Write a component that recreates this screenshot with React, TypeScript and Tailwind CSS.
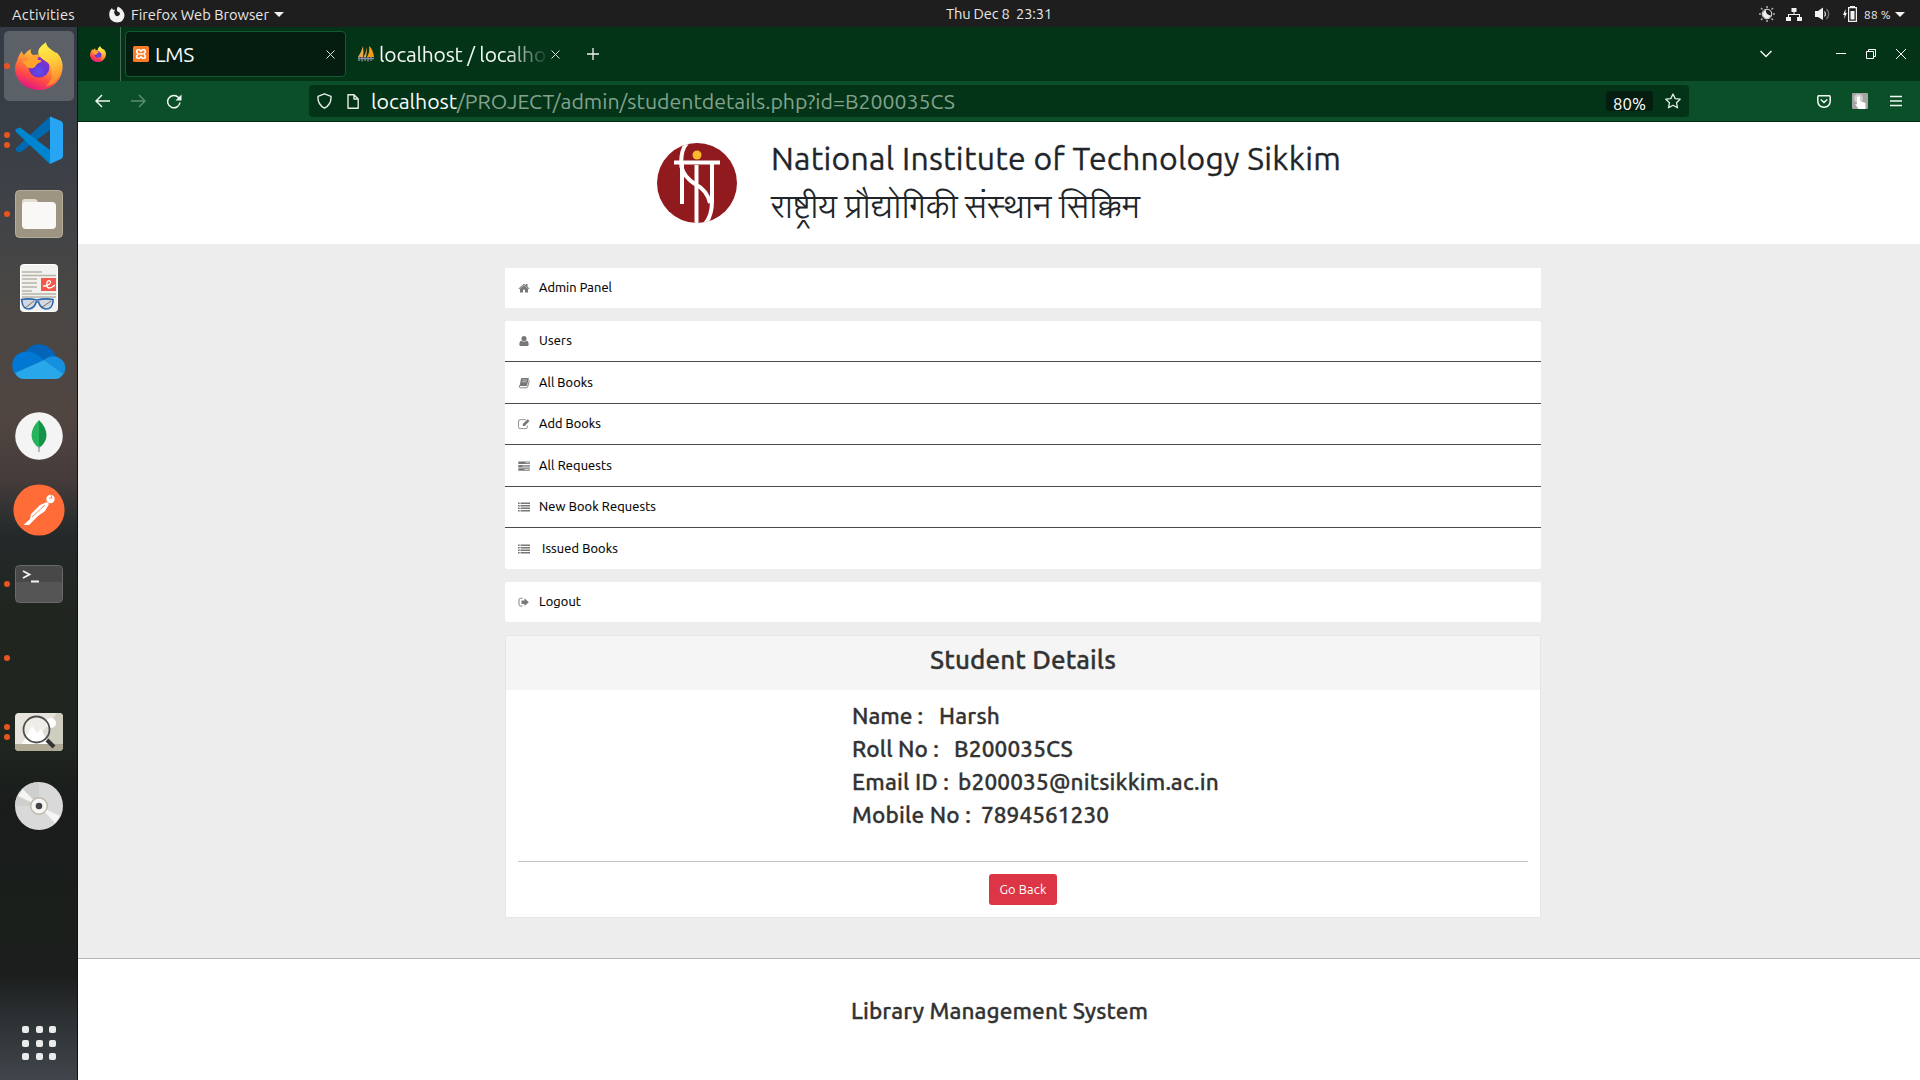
import React, { useLayoutEffect, useRef, useState } from "react";

function Fit({ w, text, className = "" }: { w: number; text: string; className?: string }) {
  const ref = useRef<HTMLSpanElement>(null);
  const [spacing, setSpacing] = useState(0);
  useLayoutEffect(() => {
    const natural = ref.current!.getBoundingClientRect().width;
    setSpacing((w - natural) / text.length);
  }, []);
  return (
    <span ref={ref} className={"inline-block whitespace-pre " + className} style={{ letterSpacing: spacing + "px" }}>
      {text}
    </span>
  );
}

function Firefox({ size }: { size: number }) {
  return (
    <svg width={size} height={size} viewBox="0 0 48 48">
      <defs>
        <linearGradient id="ffBody" x1="0.8" y1="0.1" x2="0.35" y2="1">
          <stop offset="0" stopColor="#ffe94a" />
          <stop offset="0.35" stopColor="#ff9a36" />
          <stop offset="0.7" stopColor="#ff4a45" />
          <stop offset="1" stopColor="#e31587" />
        </linearGradient>
        <radialGradient id="ffGlobe" cx="0.5" cy="0.7" r="0.75">
          <stop offset="0" stopColor="#5b4df0" />
          <stop offset="0.5" stopColor="#6a35d0" />
          <stop offset="1" stopColor="#a92bc0" />
        </radialGradient>
        <linearGradient id="ffTail" x1="0" y1="0" x2="0.2" y2="1">
          <stop offset="0" stopColor="#fff44f" />
          <stop offset="0.5" stopColor="#ffd03a" />
          <stop offset="1" stopColor="#ff8a30" />
        </linearGradient>
      </defs>
      <path d="M2 19C3 14 6 10 7 9C7 11 8 12 9 13C11 10 14 8 16 7C15 10 16 12 18 13L29 13C33 15 41 8 43 12C47 17 48 22 47.500 27C46 40 36 48 24 48C10 48 0 38 0 26C0 23 1 21 2 19Z" fill="url(#ffBody)" />
      <circle cx="24" cy="25" r="10.500" fill="url(#ffGlobe)" />
      <path d="M14 17C16 13 22 11 28 14C24 14 22 16 23 18C28 18 27 20 24 21C21 22 21 25 18 26C13 28 9 21 7 19C9 20 12 19 14 17Z" fill="#ffa22e" />
      <path d="M31 0C31 5 37 8 41 11C47 16 48 24 46 31C43 39 38 43 31 44C37 39 38 32 36 26C34 18 26 19 23.500 12C22 6 28 3 31 0Z" fill="url(#ffTail)" />
    </svg>
  );
}

function Slot({ dots = 0, active = false, children }: { dots?: number; active?: boolean; children?: React.ReactNode }) {
  return (
    <div className="flex h-[74px] shrink-0 items-center pl-[4px]">
      <div className={"relative flex h-[70px] w-[70px] items-center justify-center rounded-[5px] " + (active ? "bg-[#5c6168]" : "")}>
        <div className="absolute left-0 flex flex-col gap-[4px]">
          {Array.from({ length: dots }, (_, i) => (
            <span key={i} className="h-[6px] w-[6px] rounded-full bg-[#e95420]" />
          ))}
        </div>
        {children}
      </div>
    </div>
  );
}

function Dock() {
  return (
    <aside className="flex w-[78px] shrink-0 flex-col border-r border-[#121212] bg-[linear-gradient(180deg,#353b45_0%,#3b4047_13%,#494745_25%,#504541_37%,#453c3a_43%,#242a2b_48%,#20261f_55%,#1f251f_68%,#191c1b_74%,#1a1f1b_85%,#1c1e1d_90%,#2b3033_94%,#40464b_100%)] pt-[2px]">
      <Slot dots={1} active><Firefox size={48} /></Slot>
      <Slot dots={2}>
        <svg width="48" height="48" viewBox="0 0 48 48">
          <path d="M1 32L35 .5V14L6 36C4 37 2 36 1 34.500Q0 33 1 32Z" fill="#0069b0" />
          <path d="M1 16Q0 14 1 13L5 11.500 35 34V48L1 16Z" fill="#0086d1" />
          <path d="M35 .5L46 5Q48 6 48 8V40Q48 42 46 43L35 48Z" fill="#27a5f2" />
        </svg>
      </Slot>
      <Slot dots={1}>
        <svg width="48" height="48" viewBox="0 0 48 48">
          <rect x=".5" y=".5" width="47" height="47" rx="4" fill="#9d9482" stroke="#b6ae9a" />
          <path d="M7 20V12Q7 9 10 9H19Q22 9 23 12H30V20Z" fill="#e3dfd5" />
          <rect x="7" y="12" width="34" height="27" rx="4" fill="#f9f8f6" />
        </svg>
      </Slot>
      <Slot>
        <svg width="38" height="48" viewBox="0 0 38 48">
          <rect x=".5" y=".5" width="37" height="47" rx="3" fill="#f1f1f0" stroke="#fff" />
          <path d="M2 8H22M2 11.500H36M2 15H17M2 19H17M2 23H17M2 27H12M2 30H36M2 33H36" stroke="#b7b4a8" strokeWidth="1.600" />
          <rect x="21" y="14" width="15" height="13" fill="#f3584b" />
          <path d="M23 22C28 22 32 19 30 17C27 15 25 23 29 24C32 24 34 22 35 21" fill="none" stroke="#fff" strokeWidth="1.300" />
          <path d="M1.500 35.500Q9 34 17 36Q25 34 33 35.500V38Q32 45 26 45Q20 44 18.500 38H16Q15 44 9 45Q3 45 2 38Z" fill="#d5d9de" stroke="#2b68b3" strokeWidth="1.600" />
          <path d="M5 44L14 37M21 44L31 37" stroke="#555" strokeWidth=".8" />
        </svg>
      </Slot>
      <Slot>
        <svg width="54" height="36" viewBox="0 0 54 36">
          <path d="M13 9C17 0 28-2 36 3C41 6 43 9 44 13L30 20L12 11Z" fill="#0364b8" />
          <path d="M12 8C19 6 24 9 32 16L3 30C-3 22 1 9 12 8Z" fill="#0078d4" />
          <path d="M32 16C38 11 44 12 47 14C54 17 55 26 51 31Z" fill="#1490df" />
          <path d="M3 29L32 16L51 30C49 34 46 35 43 35H12C8 35 5 33 3 29Z" fill="#28a8ea" />
        </svg>
      </Slot>
      <Slot>
        <svg width="48" height="48" viewBox="0 0 48 48">
          <circle cx="24" cy="24" r="23.800" fill="#f4f4f4" />
          <path d="M24 8C14 18 14 29 24 36Z" fill="#27b35b" />
          <path d="M24 8C34 18 34 29 24 36Z" fill="#159447" />
          <path d="M24 34V40" stroke="#999" strokeWidth="1.300" />
        </svg>
      </Slot>
      <Slot>
        <svg className="-mt-px" width="52" height="52" viewBox="0 0 52 52">
          <circle cx="26" cy="26" r="25.600" fill="#ff6c37" />
          <circle cx="37.500" cy="15" r="4.200" fill="#fff" />
          <path d="M34 18L27 21L18 30L17 35L10.500 41L16 41L25 32L32 27L36 20Z" fill="#fff" />
          <path d="M32 21L19 33M36 14H39L38 11" fill="none" stroke="#ff6c37" strokeWidth=".8" />
        </svg>
      </Slot>
      <Slot dots={1}>
        <svg width="48" height="38" viewBox="0 0 48 38">
          <rect x=".5" y=".5" width="47" height="37" rx="4" fill="#555" stroke="#6a6a6a" />
          <path d="M1 17V5Q1 1 5 1H43Q47 1 47 5V17Z" fill="#484848" />
          <path d="M8 6L14.500 9.500L8 13M16 16.500H24" fill="none" stroke="#f4f4f4" strokeWidth="1.800" />
        </svg>
      </Slot>
      <Slot dots={1} />
      <Slot dots={2}>
        <svg width="48" height="38" viewBox="0 0 48 38">
          <defs><clipPath id="viewer"><rect width="48" height="38" rx="4" /></clipPath></defs>
          <g clipPath="url(#viewer)">
            <rect width="48" height="38" fill="#e6e4dc" />
            <path d="M42 0H48V31H18Z" fill="#cfccc0" />
            <circle cx="36" cy="10" r="5" fill="#fff" />
            <path d="M7 31L17 13L22 20L26 16L34 31Z" fill="#fff" />
            <rect y="31" width="48" height="7" fill="#b0a995" />
          </g>
          <circle cx="21.500" cy="16.500" r="13" fill="#ffffff55" stroke="#505050" strokeWidth="1.800" />
          <path d="M32 27L39 34" stroke="#333" strokeWidth="4" />
        </svg>
      </Slot>
      <Slot>
        <svg width="48" height="48" viewBox="0 0 48 48">
          <circle cx="24" cy="24" r="24" fill="#d9d9d9" />
          <path d="M24 24V0A24 24 0 0 0 0 24Z" fill="#cfcfcf" />
          <path d="M24 24L3 14L8 7ZM24 24L45 34L40 41Z" fill="#f6f6f4" />
          <circle cx="24" cy="24" r="8.300" fill="#f5f5f3" stroke="#bdb7a8" strokeWidth="1.400" />
          <circle cx="24" cy="24" r="3.300" fill="#444" />
        </svg>
      </Slot>
      <div className="mt-auto mb-[20px] ml-[22px] grid grid-cols-3 gap-[6.500px] self-start">
        {Array.from({ length: 9 }, (_, i) => (
          <span key={i} className="h-[7px] w-[7px] rounded-[2px] bg-[#ebebeb]" />
        ))}
      </div>
    </aside>
  );
}

function TopBar() {
  return (
    <header className="grid h-[27px] shrink-0 grid-cols-3 items-center bg-[#1e1e1e] text-[14.670px] leading-[27px] text-[#e8e8e8]">
      <div className="flex items-center">
        <Fit w={63} text="Activities" className="ml-[12px] pt-px" />
        <svg className="ml-[34px]" width="16" height="17" viewBox="0 0 16 16">
          <path d="M1 4L3 1.500L4 3.500L6 3L5 6L6.500 9Q8.500 10.500 10.500 8.500Q12 6 8.500 5Q7 3 9 0Q15 3 15.500 9Q15 15.500 8 16Q.5 15 .3 9Q0 6 1 4Z" fill="#f2f2f2" />
        </svg>
        <Fit w={138} text="Firefox Web Browser" className="ml-[6px] pt-px" />
        <span className="ml-[5px] border-x-[5px] border-t-[5px] border-x-transparent border-t-[#f2f2f2]" />
      </div>
      <div className="flex -translate-y-px justify-center pl-[78px]">
        <Fit w={106} text="Thu Dec 8  23:31" />
      </div>
      <div className="flex items-center justify-end pr-[15px]">
        <svg width="16" height="16" viewBox="0 0 16 16">
          <circle cx="8" cy="8" r="4.800" fill="none" stroke="#eee" strokeWidth="1" />
          <path d="M7 4Q6.500 9 12 9.500A4.200 4.200 0 1 1 7 4Z" fill="#eee" />
          <path d="M8 0V2M8 14V16M0 8H2M14 8H16M2 2L3.500 3.500M14 2L12.500 3.500M2 14L3.500 12.500M14 14L12.500 12.500" stroke="#aaa" strokeWidth="1.600" />
        </svg>
        <svg className="ml-[11px]" width="16" height="13" viewBox="0 0 16 13">
          <path d="M5.500 0H10.500V4H8.500V6H14V9H16V13H11V9H13V7H3V9H5V13H0V9H2V6H7.500V4H5.500Z" fill="#f2f2f2" />
        </svg>
        <svg className="ml-[13px]" width="15" height="14" viewBox="0 0 15 14">
          <path d="M0 4H3L8 .5V13L3 10H0Z" fill="#f2f2f2" />
          <path d="M9.500 4.500Q11.500 7 9.500 9.500" fill="none" stroke="#ddd" strokeWidth="1.200" />
          <path d="M11.500 2Q16 7 11.500 12" fill="none" stroke="#777" strokeWidth="1.200" />
        </svg>
        <svg className="ml-[13px]" width="15" height="16" viewBox="1 0 15 16">
          <path d="M3.500 3L1 9H2.700L2 13L5 7H3.500Z" fill="#f2f2f2" />
          <path d="M6.600 1.600H14.400V15.300H6.600Z" fill="none" stroke="#f2f2f2" strokeWidth="1.200" />
          <path d="M8 0H13V2H8ZM8.500 5H12.500V13.500H8.500Z" fill="#f2f2f2" />
        </svg>
        <Fit w={27} text="88 %" className="ml-[6px] pt-px text-[11.700px]" />
        <span className="ml-[4px] border-x-[5px] border-t-[5px] border-x-transparent border-t-[#f2f2f2]" />
      </div>
    </header>
  );
}

function TabStrip() {
  return (
    <div className="flex h-[54px] shrink-0 items-center bg-[#043418] text-[21px] text-[#f4f8f5]">
      <div className="flex h-full w-[43px] items-center border-r-[1px] border-[#4b6b57] pl-[12px]"><Firefox size={16} /></div>
      <div className="ml-[4px] flex h-[46px] w-[221px] items-center rounded-[4px] border border-[#135a31] bg-[#051d10] pl-[7px]">
        <svg width="16" height="16" viewBox="0 0 16 16">
          <rect width="16" height="16" rx="1.500" fill="#fb7a24" />
          <path d="M5 3.800H6.500L8 5.300L9.500 3.800H11Q12.500 4 12.300 6L11 8L12.300 10Q12.500 12 11 12.200H9.500L8 10.700L6.500 12.200H5Q3.500 12 3.700 10L5 8L3.700 6Q3.500 4 5 3.800ZM6 8H10" fill="none" stroke="#fff" strokeWidth="1.600" />
        </svg>
        <Fit w={39} text="LMS" className="ml-[6px] pt-px" />
        <svg className="mr-[10px] ml-auto" width="9" height="9" viewBox="0 0 9 9"><path d="M.5 .5L8.500 8.500M8.500 .5L.5 8.500" stroke="#d8e2db" /></svg>
      </div>
      <svg className="ml-[12px]" width="17" height="16" viewBox="0 0 17 16">
        <path d="M5 0Q6 6 5 11H0Q3 7 5 0ZM9 1Q9 7 8 11H5.500Q8 7 9 1Z" fill="#e9a64a" />
        <path d="M11 0Q15 3 16 11H9Q12 6 11 0Z" fill="#f89c0e" />
        <path d="M0 12.500H16M1 15V11M4 15.500V11M7 15V11M10 15.500V11M13 15V11" stroke="#8b8f9d" strokeWidth="1.300" />
      </svg>
      <div className="ml-[4px] w-[170px] overflow-hidden pt-px whitespace-nowrap [mask-image:linear-gradient(90deg,#000_75%,transparent)]">
        <Fit w={167} text="localhost / localho" />
      </div>
      <svg className="ml-[2px]" width="9" height="9" viewBox="0 0 9 9"><path d="M.5 .5L8.500 8.500M8.500 .5L.5 8.500" stroke="#d8e2db" /></svg>
      <svg className="ml-[27px]" width="12" height="12" viewBox="0 0 12 12"><path d="M6 0V12M0 6H12" stroke="#eef4f0" strokeWidth="1.300" /></svg>
      <div className="ml-auto flex items-center pr-[14px]">
        <svg width="12" height="8" viewBox="0 0 12 8"><path d="M.5 1L6 6.500L11.500 1" fill="none" stroke="#eef4f0" strokeWidth="1.500" /></svg>
        <svg className="ml-[64px]" width="10" height="10" viewBox="0 0 10 10"><path d="M0 4.500H10" stroke="#fff" /></svg>
        <svg className="ml-[20px]" width="10" height="10" viewBox="0 0 10 10"><path d="M.5 2.500H7.500V9.500H.5ZM2.500 2.500V.5H9.500V7.500H7.500" fill="none" stroke="#fff" /></svg>
        <svg className="ml-[20px]" width="10" height="10" viewBox="0 0 10 10"><path d="M0 0L10 10M10 0L0 10" stroke="#fff" /></svg>
      </div>
    </div>
  );
}

function Toolbar() {
  return (
    <div className="flex h-[41px] shrink-0 items-center border-b border-[#03280f] bg-[#0a4f27]">
      <svg className="ml-[17px]" width="15" height="14" viewBox="0 0 15 14"><path d="M15 7H1M7 1L1 7L7 13" fill="none" stroke="#f4f8f5" strokeWidth="1.500" /></svg>
      <svg className="ml-[21px]" width="15" height="14" viewBox="0 0 15 14"><path d="M0 7H14M8 1L14 7L8 13" fill="none" stroke="#5d8d70" strokeWidth="1.500" /></svg>
      <svg className="ml-[21px]" width="15" height="15" viewBox="0 0 15 15"><path d="M13 8.500A6.200 6.200 0 1 1 11.500 3.500L13 5" fill="none" stroke="#f4f8f5" strokeWidth="1.500" /><path d="M14.500 .5V6.500H8.500Z" fill="#f4f8f5" /></svg>
      <div className="ml-[127px] flex h-[32px] w-[1380px] items-center rounded-[4px] bg-[#043418] pl-[8px]">
        <svg width="15" height="16" viewBox="0 0 15 16"><path d="M7.500 .8L14 3.300Q14.500 11.500 7.500 15.200Q.5 11.500 1 3.300Z" fill="none" stroke="#e4ece6" strokeWidth="1.400" strokeLinejoin="round" /></svg>
        <svg className="ml-[15px]" width="12" height="15" viewBox="0 0 12 15"><path d="M1 .8H7L11.200 5V14.200H1ZM7 .8V5H11.200" fill="none" stroke="#e4ece6" strokeWidth="1.400" strokeLinejoin="round" /></svg>
        <Fit w={86} text="localhost" className="ml-[12px] pt-px text-[21.300px] text-[#f9fbfa]" />
        <Fit w={498} text="/PROJECT/admin/studentdetails.php?id=B200035CS" className="pt-px text-[21.300px] text-[#82a28d]" />
        <div className="mr-[12px] ml-auto flex h-[20px] w-[47px] items-center justify-center rounded-[3px] bg-[#051d10] pt-[5px] text-[16.700px] text-white"><Fit w={33} text="80%" /></div>
        <svg className="mr-[8px]" width="16" height="16" viewBox="0 0 16 16"><path d="M8 1L10.200 5.600L15.200 6.200L11.500 9.700L12.500 14.800L8 12.300L3.500 14.800L4.500 9.700L.8 6.200L5.800 5.600Z" fill="none" stroke="#e4ece6" strokeWidth="1.300" strokeLinejoin="round" /></svg>
      </div>
      <div className="ml-auto flex items-center pr-[18px]">
        <svg width="14" height="13" viewBox="0 0 14 13"><path d="M1.500 .8H12.500Q13.200 1 13.200 2V6Q13 12 7 12.200Q1 12 .8 6V2Q.8 1 1.500 .8ZM3.800 4.500L7 7.500L10.200 4.500" fill="none" stroke="#f4f8f5" strokeWidth="1.500" /></svg>
        <svg className="ml-[21px]" width="16" height="16" viewBox="0 0 16 16">
          <rect width="16" height="16" rx="1" fill="#a5a5a5" /><circle cx="6.500" cy="5.500" r="4.500" fill="#cfcfcf" />
          <path d="M5 4Q6.500 2.500 8 4V8L13.500 10V16H6.500L3 11L5 11.500Z" fill="#fff" />
        </svg>
        <svg className="ml-[22px]" width="12" height="12" viewBox="0 0 12 12"><path d="M0 1.500H12M0 6H12M0 10.500H12" stroke="#f4f8f5" strokeWidth="1.400" /></svg>
      </div>
    </div>
  );
}

function Crest() {
  return (
    <svg width="80" height="80" viewBox="0 0 80 80">
      <defs><clipPath id="crest"><circle cx="40" cy="40" r="40" /></clipPath></defs>
      <g clipPath="url(#crest)">
        <rect width="80" height="80" fill="#911a1e" />
        <path d="M17 19.500H63M25 21V61M39.500 22V80" stroke="#fff" strokeWidth="4" fill="none" />
        <path d="M30 0Q23 8 24.500 24Q27 34 38 41Q50 47 53 60M55 21V58Q55 74 47 82" stroke="#fff" strokeWidth="4" fill="none" />
        <circle cx="40" cy="12" r="4.500" fill="#fdb92e" />
      </g>
    </svg>
  );
}

type IconName = "home" | "user" | "book" | "edit" | "tasks" | "list" | "logout";

function MenuIcon({ name }: { name: IconName }) {
  return (
    <svg width="12" height="12" viewBox="0 0 12 12" fill="currentColor" className="text-[#777]">
      {name === "home" && <path d="M6 3.500L10 6.800V10.500H7V7.800H5V10.500H2V6.800ZM.5 6.500L6 1.700L7.800 3.200V2H9.500V4.700L11.500 6.500L11 7.200L6 3L1 7.200Z" />}
      {name === "user" && <path d="M6 1A2.500 2.500 0 0 1 6 6.200A2.500 2.500 0 0 1 6 1ZM3.500 5.700Q6 8 8.500 5.700Q10.600 5.700 10.700 9.500Q10.600 11 9.300 11H2.700Q1.400 11 1.300 9.500Q1.400 5.700 3.500 5.700Z" />}
      {name === "book" && (
        <>
          <path d="M3.600 1H10.300Q11 1.200 10.800 1.900L9 8.400Q8.800 9 8 9H1.600L3 1.700Q3.200 1 3.600 1Z" />
          <path d="M1.500 8.500Q1 10.800 2.200 10.800H8.500Q9.300 10.800 9.600 10L11.400 3.500" fill="none" stroke="currentColor" strokeWidth=".9" />
          <path d="M4.500 3H9M4 4.800H8.500" stroke="#ddd" strokeWidth=".7" />
        </>
      )}
      {name === "edit" && (
        <>
          <path d="M8 1.700H2Q.6 1.700 .6 3V9.300Q.6 10.600 2 10.600H8Q9.300 10.600 9.300 9.300V7.500" fill="none" stroke="currentColor" strokeWidth=".8" />
          <path d="M9.700 1.200L11.500 3L6.700 8H4.800V6Z" />
        </>
      )}
      {name === "tasks" && (
        <>
          <path d="M.3 1.500H11.700V4H.3ZM.3 4.900H11.700V7.400H.3ZM.3 8.300H11.700V10.800H.3Z" />
          <path d="M7.500 2.700H10.900M4.300 6.100H10.900M6.500 9.500H10.900" stroke="#ddd" strokeWidth=".9" />
        </>
      )}
      {name === "list" && <path d="M0 1.500H1.700V3H0ZM2.500 1.500H12V3H2.500ZM0 4H1.700V5.500H0ZM2.500 4H12V5.500H2.500ZM0 6.500H1.700V8H0ZM2.500 6.500H12V8H2.500ZM0 9H1.700V10.500H0ZM2.500 9H12V10.500H2.500Z" />}
      {name === "logout" && (
        <>
          <path d="M4.500 2.300H2.500Q1 2.300 1 3.800V8.500Q1 10 2.500 10H4.500" fill="none" stroke="currentColor" strokeWidth=".9" />
          <path d="M3.500 4.500H6.500V2.300L10.800 6.200L6.500 10V7.900H3.500Z" />
        </>
      )}
    </svg>
  );
}

function MenuRow({ icon, label, w, className }: { icon: IconName; label: string; w: number; className: string }) {
  return (
    <div className={"flex items-center bg-white pl-[13px] text-[12.800px] text-black [-webkit-text-stroke:0.15px] " + className}>
      <MenuIcon name={icon} />
      <Fit w={w} text={label} className={label === "Issued Books" ? "ml-[12px]" : "ml-[9px]"} />
    </div>
  );
}

function Detail({ label, lw, value, vw, gap }: { label: string; lw: number; value: string; vw: number; gap: string }) {
  return (
    <div className="flex h-[33px] items-center">
      <Fit w={lw} text={label} />
      <Fit w={vw} text={value} className={gap} />
    </div>
  );
}

export default function App() {
  return (
    <div className="flex h-[1080px] w-[1920px] flex-col overflow-hidden bg-white font-['Ubuntu','Lohit_Devanagari','Noto_Sans',sans-serif]">
      <TopBar />
      <div className="flex min-h-0 flex-1">
        <Dock />
        <div className="flex min-w-0 flex-1 flex-col">
          <TabStrip />
          <Toolbar />
          <div className="flex h-[122px] shrink-0 bg-white pt-[21px] pl-[579px] text-[#212529]">
            <Crest />
            <div className="ml-[34px] flex flex-col text-[32px]">
              <Fit w={570} text="National Institute of Technology Sikkim" className="-mt-[8px] leading-[46px] [-webkit-text-stroke:0.3px]" />
              <span className="mt-[2px] leading-[46px] whitespace-nowrap">राष्ट्रीय प्रौद्योगिकी संस्थान सिक्किम</span>
            </div>
          </div>
          <main className="flex h-[714px] shrink-0 flex-col items-center bg-[#ededed] pt-[24px] pl-[48px]">
            <nav className="flex w-[1036px] flex-col">
              <MenuRow icon="home" label="Admin Panel" w={73} className="h-[40px] rounded-[2px]" />
              <MenuRow icon="user" label="Users" w={33} className="mt-[13px] h-[41px] rounded-t-[2px] border-b border-[#4a4a4a]" />
              <MenuRow icon="book" label="All Books" w={54} className="h-[42px] border-b border-[#4a4a4a]" />
              <MenuRow icon="edit" label="Add Books" w={62} className="h-[41px] border-b border-[#4a4a4a]" />
              <MenuRow icon="tasks" label="All Requests" w={73} className="h-[42px] border-b border-[#4a4a4a]" />
              <MenuRow icon="list" label="New Book Requests" w={117} className="h-[41px] border-b border-[#4a4a4a]" />
              <MenuRow icon="list" label="Issued Books" w={76} className="h-[41px] rounded-b-[2px]" />
              <MenuRow icon="logout" label="Logout" w={42} className="mt-[13px] h-[40px] rounded-[2px]" />
            </nav>
            <section className="mt-[13px] flex h-[283px] w-[1036px] flex-col rounded-[2px] border border-[#e6e6e6] bg-white font-medium text-[#333]">
              <div className="flex h-[54px] shrink-0 justify-center bg-[#f5f5f5] pt-px text-[26px] leading-[46px] [-webkit-text-stroke:0.3px]">
                <Fit w={186} text="Student Details" />
              </div>
              <div className="mt-[9px] flex flex-col pl-[346px] text-[22.600px] leading-[33px] [-webkit-text-stroke:0.3px]">
                <Detail label="Name :" lw={71} value="Harsh" vw={61} gap="ml-[16px]" />
                <Detail label="Roll No :" lw={87} value="B200035CS" vw={119} gap="ml-[15px]" />
                <Detail label="Email ID :" lw={97} value="b200035@nitsikkim.ac.in" vw={261} gap="ml-[9px]" />
                <Detail label="Mobile No :" lw={119} value="7894561230" vw={128} gap="ml-[10px]" />
              </div>
              <div className="mx-[12px] mt-[30px] h-px shrink-0 bg-[#c4c4c4]" />
              <button className="mt-[12px] h-[31px] w-[68px] shrink-0 self-center rounded-[3px] bg-[#dc3545] text-[12.800px] font-normal text-white">
                <Fit w={47} text="Go Back" />
              </button>
            </section>
          </main>
          <footer className="flex flex-1 justify-center border-t border-[#b5b5b5] bg-white pt-[35px] text-[22.600px] leading-[33px] font-medium text-[#333] [-webkit-text-stroke:0.3px]">
            <Fit w={297} text="Library Management System" className="ml-px" />
          </footer>
        </div>
      </div>
    </div>
  );
}
